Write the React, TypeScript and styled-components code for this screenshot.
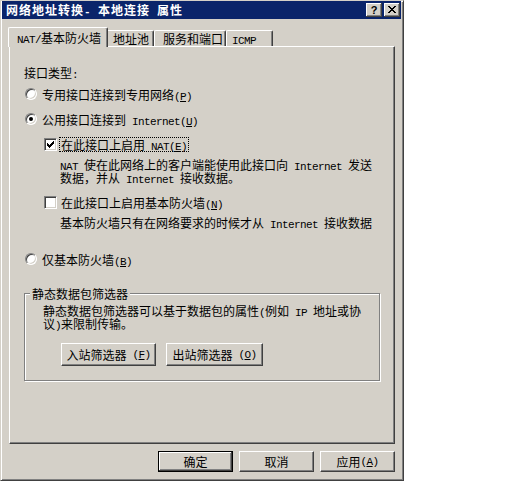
import React from "react";
import styled, { createGlobalStyle } from "styled-components";

const GlobalStyle = createGlobalStyle`
  html, body {
    margin: 0;
    padding: 0;
    background: #fff;
  }
  body {
    font-family: "Noto Sans CJK SC", "Liberation Sans", sans-serif;
    font-size: 12px;
    color: #000;
  }
`;

const Window = styled.div`
  box-sizing: border-box;
  width: 404px;
  height: 481px;
  background: #d4d0c8;
  border: 1px solid;
  border-color: #d4d0c8 #404040 #404040 #d4d0c8;
  box-shadow: inset 1px 1px #fff, inset -1px -1px #808080;
  padding: 0 2px 2px 1px;
  display: flex;
  flex-direction: column;
`;

const TitleBar = styled.div`
  flex: none;
  height: 18px;
  background: #0a246a;
  color: #fff;
  display: flex;
  align-items: center;
  padding: 0 1px 0 4px;
`;

const TitleText = styled.div`
  flex: 1;
  font-weight: bold;
  letter-spacing: 1px;
  line-height: 18px;
  white-space: nowrap;
`;

// SimSun draws latin glyphs half width (6px); a narrowed mono face stands in for it
const Lat = styled.span<{ $bold?: boolean }>`
  font-family: "Liberation Mono", monospace;
  font-size: 11px;
  letter-spacing: ${(p) => (p.$bold ? "0.4px" : "-0.6px")};
  white-space: pre;
  line-height: 0;
`;

const CapGroup = styled.div`
  display: flex;
  gap: 2px;
`;

const CapButton = styled.div`
  box-sizing: border-box;
  width: 16px;
  height: 14px;
  background: #d4d0c8;
  box-shadow: inset -1px -1px #404040, inset 1px 1px #fff, inset -2px -2px #808080;
  display: flex;
  align-items: center;
  justify-content: center;
  color: #000;
  font: bold 11px "Liberation Sans", sans-serif;
  padding-bottom: 1px;
`;

const Body = styled.div`
  flex: 1;
  display: flex;
  flex-direction: column;
  padding: 8px 6px 0 7px;
`;

const TabRow = styled.div`
  display: flex;
  align-items: flex-end;
  height: 19px;
  padding-left: 1px;
`;

const Tab = styled.div<{ $active?: boolean; $w: number; $pl: number }>`
  box-sizing: border-box;
  position: relative;
  width: ${(p) => p.$w + (p.$active ? 4 : 0)}px;
  height: ${(p) => (p.$active ? 20 : 16)}px;
  margin: ${(p) => (p.$active ? "0 -2px -1px" : "0")};
  z-index: ${(p) => (p.$active ? 2 : 1)};
  background: #d4d0c8;
  border-top: 1px solid #fff;
  border-left: 1px solid #fff;
  border-right: 1px solid #404040;
  border-radius: 2px 2px 0 0;
  box-shadow: inset -1px 0 #808080;
  padding-left: ${(p) => p.$pl - 1}px;
  padding-top: ${(p) => (p.$active ? 3 : 1)}px;
  line-height: 13px;
  white-space: nowrap;
`;

const Panel = styled.div`
  box-sizing: border-box;
  height: 398px;
  border: 1px solid;
  border-color: #fff #404040 #404040 #fff;
  box-shadow: inset -1px -1px #808080;
  padding: 18px 0 0 14px;
  display: flex;
  flex-direction: column;
  align-items: flex-start;
`;

const Caption = styled.div`
  height: 16px;
  line-height: 16px;
  white-space: nowrap;
`;

const OptionRow = styled.div<{ $mt: number; $indent: number }>`
  display: flex;
  align-items: center;
  height: 16px;
  margin-top: ${(p) => p.$mt}px;
  padding-left: ${(p) => p.$indent}px;
  white-space: nowrap;
`;

const Radio = styled.span<{ $checked?: boolean }>`
  box-sizing: border-box;
  flex: none;
  width: 12px;
  height: 12px;
  border-radius: 50%;
  border: 1px solid;
  border-color: #808080 #fff #fff #808080;
  box-shadow: inset 1px 1px #404040, inset -1px -1px #d4d0c8;
  background: #fff;
  display: flex;
  align-items: center;
  justify-content: center;

  &::after {
    content: "";
    width: 4px;
    height: 4px;
    border-radius: 50%;
    background: ${(p) => (p.$checked ? "#000" : "transparent")};
  }
`;

const Check = styled.span`
  box-sizing: border-box;
  flex: none;
  width: 13px;
  height: 13px;
  border: 1px solid;
  border-color: #808080 #fff #fff #808080;
  box-shadow: inset 1px 1px #404040, inset -1px -1px #d4d0c8;
  background: #fff;
  display: flex;
  align-items: center;
  justify-content: center;
`;

const Label = styled.span<{ $focus?: boolean; $gap: number }>`
  margin-left: ${(p) => p.$gap}px;
  padding: 0 1px;
  border: 1px dotted ${(p) => (p.$focus ? "#000" : "transparent")};
  line-height: 13px;
`;

const Desc = styled.div<{ $mt: number }>`
  margin-top: ${(p) => p.$mt}px;
  padding-left: 36px;
  line-height: 13px;
  white-space: nowrap;
`;

const Group = styled.fieldset`
  box-sizing: border-box;
  width: 356px;
  margin: 20px 0 0 0;
  padding: 4px 12px 14px 5px;
  border: 1px solid #808080;
  box-shadow: inset 1px 1px #fff, 1px 1px #fff;
  min-inline-size: 0;
`;

const Legend = styled.legend`
  padding: 0 2px;
  line-height: 13px;
  background: #d4d0c8;
`;

const GroupText = styled.div`
  padding-left: 13px;
  line-height: 13px;
  white-space: nowrap;
`;

const ButtonRow = styled.div<{ $mt: number; $pl: number; $gap: number }>`
  display: flex;
  margin-top: ${(p) => p.$mt}px;
  padding-left: ${(p) => p.$pl}px;
  gap: ${(p) => p.$gap}px;
`;

const PushButton = styled.div<{ $w: number; $h: number; $default?: boolean }>`
  box-sizing: border-box;
  width: ${(p) => p.$w}px;
  height: ${(p) => p.$h}px;
  background: #d4d0c8;
  border: 1px solid;
  border-color: ${(p) => (p.$default ? "#000" : "#fff #404040 #404040 #fff")};
  box-shadow: ${(p) =>
    p.$default
      ? "inset -1px -1px #404040, inset 1px 1px #fff, inset -2px -2px #808080"
      : "inset -1px -1px #808080"};
  display: flex;
  align-items: center;
  justify-content: center;
  white-space: nowrap;
  line-height: 13px;
`;

const Footer = styled.div`
  display: flex;
  justify-content: flex-end;
  gap: 6px;
  margin-top: 7px;
`;

function Mn({ k }: { k: string }) {
  return (
    <Lat>
      (<u>{k}</u>)
    </Lat>
  );
}

export default function App() {
  return (
    <>
      <GlobalStyle />
      <Window>
        <TitleBar>
          <TitleText>
            网络地址转换<Lat $bold>- </Lat>本地连接<Lat $bold> </Lat>属性
          </TitleText>
          <CapGroup>
            <CapButton>?</CapButton>
            <CapButton>
              <svg width="8" height="7" viewBox="0 0 8 7" shapeRendering="crispEdges">
                <path d="M0 0h2v1h-2zM6 0h2v1h-2zM1 1h2v1h-2zM5 1h2v1h-2zM2 2h4v1h-4zM3 3h2v1h-2zM2 4h4v1h-4zM1 5h2v1h-2zM5 5h2v1h-2zM0 6h2v1h-2zM6 6h2v1h-2z" fill="#000" />
              </svg>
            </CapButton>
          </CapGroup>
        </TitleBar>
        <Body>
          <TabRow>
            <Tab $active $w={96} $pl={9}>
              <Lat>NAT/</Lat>基本防火墙
            </Tab>
            <Tab $w={48} $pl={7}>地址池</Tab>
            <Tab $w={72} $pl={9}>服务和端口</Tab>
            <Tab $w={47} $pl={6}>
              <Lat>ICMP</Lat>
            </Tab>
          </TabRow>
          <Panel>
            <Caption>
              接口类型<Lat>:</Lat>
            </Caption>
            <OptionRow $mt={5} $indent={1}>
              <Radio />
              <Label $gap={3}>
                专用接口连接到专用网络<Mn k="P" />
              </Label>
            </OptionRow>
            <OptionRow $mt={9} $indent={1}>
              <Radio $checked />
              <Label $gap={3}>
                公用接口连接到<Lat> Internet</Lat>
                <Mn k="U" />
              </Label>
            </OptionRow>
            <OptionRow $mt={9} $indent={20}>
              <Check>
                <svg width="7" height="7" viewBox="0 0 7 7" shapeRendering="crispEdges">
                  <path d="M6 0h1v3h-1zM5 1h1v3h-1zM4 2h1v3h-1zM3 3h1v3h-1zM2 4h1v3h-1zM1 3h1v3h-1zM0 2h1v3h-1z" fill="#000" />
                </svg>
              </Check>
              <Label $gap={2} $focus>
                在此接口上启用<Lat> NAT</Lat>
                <Mn k="E" />
              </Label>
            </OptionRow>
            <Desc $mt={6}>
              <Lat>NAT </Lat>使在此网络上的客户端能使用此接口向<Lat> Internet </Lat>发送
              <br />
              数据，并从<Lat> Internet </Lat>接收数据。
            </Desc>
            <OptionRow $mt={10} $indent={20}>
              <Check />
              <Label $gap={2}>
                在此接口上启用基本防火墙<Mn k="N" />
              </Label>
            </OptionRow>
            <Desc $mt={6}>
              基本防火墙只有在网络要求的时候才从<Lat> Internet </Lat>接收数据
            </Desc>
            <OptionRow $mt={22} $indent={1}>
              <Radio />
              <Label $gap={3}>
                仅基本防火墙<Mn k="B" />
              </Label>
            </OptionRow>
            <Group>
              <Legend>静态数据包筛选器</Legend>
              <GroupText>
                静态数据包筛选器可以基于数据包的属性<Lat>(</Lat>例如<Lat> IP </Lat>地址或协
                <br />
                议<Lat>)</Lat>来限制传输。
              </GroupText>
              <ButtonRow $mt={13} $pl={31} $gap={10}>
                <PushButton $w={95} $h={23}>
                  入站筛选器<Lat> </Lat>
                  <Mn k="F" />
                </PushButton>
                <PushButton $w={97} $h={23}>
                  出站筛选器<Lat> </Lat>
                  <Mn k="O" />
                </PushButton>
              </ButtonRow>
            </Group>
          </Panel>
          <Footer>
            <PushButton $w={75} $h={21} $default>
              确定
            </PushButton>
            <PushButton $w={75} $h={21}>
              取消
            </PushButton>
            <PushButton $w={75} $h={21}>
              应用<Mn k="A" />
            </PushButton>
          </Footer>
        </Body>
      </Window>
    </>
  );
}
